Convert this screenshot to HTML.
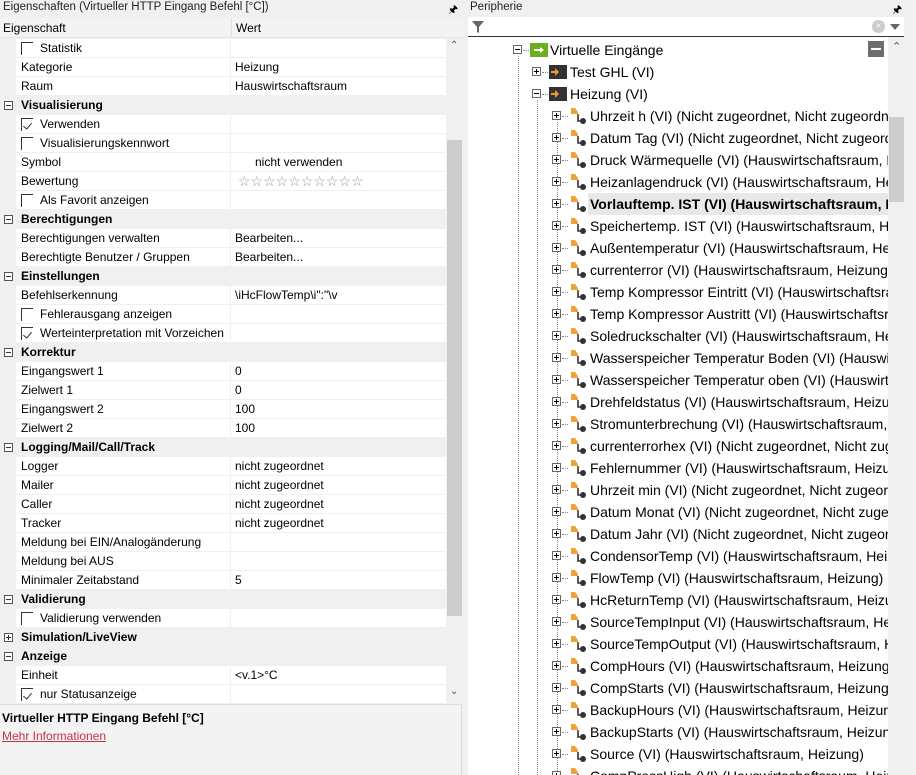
<!DOCTYPE html>
<html><head><meta charset="utf-8"><style>
*{margin:0;padding:0;box-sizing:border-box}
html,body{width:916px;height:775px;overflow:hidden}
body{background:#f0f0f0;font-family:"Liberation Sans",sans-serif;position:relative;color:#000}
.a{position:absolute}
#L{left:0;top:0;width:464px;height:775px;background:#f0f0f0}
.title{font-size:11.5px;color:#222;top:1px}
.row{position:absolute;left:0;width:446px;height:19px;font-size:12px;line-height:19px;background:#fff;border-bottom:1px solid #f0f0f0;margin-top:1px}
.row .n{position:absolute;left:21px;top:0}
.row .v{position:absolute;left:235px;top:0}
.row .sep{position:absolute;left:230px;top:0;width:1px;height:19px;background:#f0f0f0}
.row .ind{position:absolute;left:0;top:0;width:16px;height:19px;background:#f0f0f0}
.g{background:#f0f0f0;font-weight:bold}
.g .n{left:21px}
.g .bx{position:absolute;left:4px;top:5px;width:9px;height:9px;border:1px solid #555;background:#fff}
.g .bx:after{content:"";position:absolute;left:1px;top:3px;width:5px;height:1px;background:#333}
.g .bx.p:before{content:"";position:absolute;left:3px;top:1px;width:1px;height:5px;background:#333}
.cb{position:absolute;left:21px;top:3px;width:12px;height:13px;border-left:1px solid #333;border-top:1px solid #333}
.cb.c:after{content:"";position:absolute;left:3px;top:2px;width:4px;height:7px;border-right:1px solid #333;border-bottom:1px solid #333;transform:rotate(40deg)}
.row .cn{position:absolute;left:40px;top:0}
#R{left:466px;top:0;width:450px;height:775px}
.t{position:absolute;font-size:14px;line-height:22px;height:22px;white-space:nowrap;overflow:hidden}
.ex{position:absolute;width:9px;height:9px;border:1px solid #666;background:#fff}
.ex:after{content:"";position:absolute;left:1px;top:3px;width:5px;height:1px;background:#000}
.ex.p:before{content:"";position:absolute;left:3px;top:1px;width:1px;height:5px;background:#000}
.dh{position:absolute;height:1px;border-top:1px dotted #888}
.dv{position:absolute;width:1px;border-left:1px dotted #888}
.ic{position:absolute;width:18px;height:14px}
</style></head><body>
<div id="L" class="a">
<div class="a title" style="left:3px">Eigenschaften (Virtueller HTTP Eingang Befehl [°C])</div>
<div class="a" style="left:448px;top:1px;font-size:11px">&#x1F588;</div>
<div class="a" style="left:0;top:18px;width:464px;height:20px;background:#f3f3f3;border-bottom:1px solid #e6e6e6;font-size:12px;line-height:20px">
 <span class="a" style="left:3px">Eigenschaft</span><span class="a" style="left:231px;top:0;width:1px;height:20px;background:#e0e0e0"></span><span class="a" style="left:236px">Wert</span></div>
<div class="row" style="top:38px"><div class="ind"></div><div class="cb"></div><span class="cn">Statistik</span><div class="sep"></div></div>
<div class="row" style="top:57px"><div class="ind"></div><span class="n">Kategorie</span><div class="sep"></div><span class="v">Heizung</span></div>
<div class="row" style="top:76px"><div class="ind"></div><span class="n">Raum</span><div class="sep"></div><span class="v">Hauswirtschaftsraum</span></div>
<div class="row g" style="top:95px"><div class="bx"></div><span class="n">Visualisierung</span></div>
<div class="row" style="top:114px"><div class="ind"></div><div class="cb c"></div><span class="cn">Verwenden</span><div class="sep"></div></div>
<div class="row" style="top:133px"><div class="ind"></div><div class="cb"></div><span class="cn">Visualisierungskennwort</span><div class="sep"></div></div>
<div class="row" style="top:152px"><div class="ind"></div><span class="n">Symbol</span><div class="sep"></div><span class="v" style="left:255px">nicht verwenden</span></div>
<div class="row" style="top:171px"><div class="ind"></div><span class="n">Bewertung</span><div class="sep"></div><span class="v" style="left:238px;color:#999;font-size:14px;letter-spacing:0px">☆☆☆☆☆☆☆☆☆☆</span></div>
<div class="row" style="top:190px"><div class="ind"></div><div class="cb"></div><span class="cn">Als Favorit anzeigen</span><div class="sep"></div></div>
<div class="row g" style="top:209px"><div class="bx"></div><span class="n">Berechtigungen</span></div>
<div class="row" style="top:228px"><div class="ind"></div><span class="n">Berechtigungen verwalten</span><div class="sep"></div><span class="v">Bearbeiten...</span></div>
<div class="row" style="top:247px"><div class="ind"></div><span class="n">Berechtigte Benutzer / Gruppen</span><div class="sep"></div><span class="v">Bearbeiten...</span></div>
<div class="row g" style="top:266px"><div class="bx"></div><span class="n">Einstellungen</span></div>
<div class="row" style="top:285px"><div class="ind"></div><span class="n">Befehlserkennung</span><div class="sep"></div><span class="v">\iHcFlowTemp\i":"\v</span></div>
<div class="row" style="top:304px"><div class="ind"></div><div class="cb"></div><span class="cn">Fehlerausgang anzeigen</span><div class="sep"></div></div>
<div class="row" style="top:323px"><div class="ind"></div><div class="cb c"></div><span class="cn">Werteinterpretation mit Vorzeichen</span><div class="sep"></div></div>
<div class="row g" style="top:342px"><div class="bx"></div><span class="n">Korrektur</span></div>
<div class="row" style="top:361px"><div class="ind"></div><span class="n">Eingangswert 1</span><div class="sep"></div><span class="v">0</span></div>
<div class="row" style="top:380px"><div class="ind"></div><span class="n">Zielwert 1</span><div class="sep"></div><span class="v">0</span></div>
<div class="row" style="top:399px"><div class="ind"></div><span class="n">Eingangswert 2</span><div class="sep"></div><span class="v">100</span></div>
<div class="row" style="top:418px"><div class="ind"></div><span class="n">Zielwert 2</span><div class="sep"></div><span class="v">100</span></div>
<div class="row g" style="top:437px"><div class="bx"></div><span class="n">Logging/Mail/Call/Track</span></div>
<div class="row" style="top:456px"><div class="ind"></div><span class="n">Logger</span><div class="sep"></div><span class="v">nicht zugeordnet</span></div>
<div class="row" style="top:475px"><div class="ind"></div><span class="n">Mailer</span><div class="sep"></div><span class="v">nicht zugeordnet</span></div>
<div class="row" style="top:494px"><div class="ind"></div><span class="n">Caller</span><div class="sep"></div><span class="v">nicht zugeordnet</span></div>
<div class="row" style="top:513px"><div class="ind"></div><span class="n">Tracker</span><div class="sep"></div><span class="v">nicht zugeordnet</span></div>
<div class="row" style="top:532px"><div class="ind"></div><span class="n">Meldung bei EIN/Analogänderung</span><div class="sep"></div></div>
<div class="row" style="top:551px"><div class="ind"></div><span class="n">Meldung bei AUS</span><div class="sep"></div></div>
<div class="row" style="top:570px"><div class="ind"></div><span class="n">Minimaler Zeitabstand</span><div class="sep"></div><span class="v">5</span></div>
<div class="row g" style="top:589px"><div class="bx"></div><span class="n">Validierung</span></div>
<div class="row" style="top:608px"><div class="ind"></div><div class="cb"></div><span class="cn">Validierung verwenden</span><div class="sep"></div></div>
<div class="row g" style="top:627px"><div class="bx p"></div><span class="n">Simulation/LiveView</span></div>
<div class="row g" style="top:646px"><div class="bx"></div><span class="n">Anzeige</span></div>
<div class="row" style="top:665px"><div class="ind"></div><span class="n">Einheit</span><div class="sep"></div><span class="v">&lt;v.1&gt;°C</span></div>
<div class="row" style="top:684px"><div class="ind"></div><div class="cb c"></div><span class="cn">nur Statusanzeige</span><div class="sep"></div></div>
<div class="a" style="left:446px;top:38px;width:17px;height:665px;background:#f0f0f0"></div>
<div class="a" style="left:447px;top:140px;width:15px;height:476px;background:#cdcdcd"></div>
<div class="a" style="left:450px;top:40px;font-size:10px;color:#555">&#x2303;</div>
<div class="a" style="left:450px;top:686px;font-size:10px;color:#555">&#x2304;</div>
<div class="a" style="left:0;top:704px;width:462px;height:71px;background:#f3f3f3;border-top:1px solid #ddd;border-right:1px solid #ddd">
 <div class="a" style="left:2px;top:6px;font-size:12px;font-weight:bold">Virtueller HTTP Eingang Befehl [°C]</div>
 <div class="a" style="left:2px;top:24px;font-size:12px;color:#c8314a;text-decoration:underline">Mehr Informationen</div>
</div>
</div>

<div id="R" class="a">
<div class="a title" style="left:4px">Peripherie</div>
<div class="a" style="left:426px;top:1px;font-size:11px">&#x1F588;</div>
<div class="a" style="left:2px;top:17px;width:436px;height:20px;background:#fff;border-bottom:1px solid #333">
 <svg class="a" style="left:3px;top:3px" width="14" height="14"><path d="M1 1h12L8 7v6L6 12V7z" fill="#666"/></svg>
 <div class="a" style="left:404px;top:3px;width:13px;height:13px;border-radius:50%;background:#ccc;color:#fff;font-size:10px;line-height:13px;text-align:center">×</div>
 <svg class="a" style="left:422px;top:7px" width="10" height="6"><path d="M0 0h10L5 6z" fill="#666"/></svg>
</div>
<div class="a" style="left:2px;top:37px;width:420px;height:738px;background:#fff"></div>
<div class="a" style="left:422px;top:37px;width:17px;height:738px;background:#f0f0f0"></div>
<div class="a" style="left:423px;top:117px;width:15px;height:85px;background:#cdcdcd"></div>
<div class="a" style="left:426px;top:40px;font-size:11px;color:#555">&#x2303;</div>
<div class="a" style="left:440px;top:37px;width:10px;height:738px;background:#f0f0f0"></div>
<div class="a" style="left:402px;top:41px;width:16px;height:16px;background:#6e6e6e"><div class="a" style="left:3px;top:7px;width:10px;height:2px;background:#fff"></div></div>

<div class="dv" style="left:52px;top:56px;height:719px"></div>
<div class="dv" style="left:71px;top:100px;height:675px"></div>
<div class="dv" style="left:91px;top:122px;height:653px"></div>

<div class="ex" style="left:47px;top:45px"></div><div class="dh" style="left:57px;top:50px;width:6px"></div>
<div class="ic" style="left:64px;top:43px;background:#6cae1d"><div class="a" style="left:4px;top:6px;width:7px;height:2px;background:#fff"></div><div class="a" style="left:10px;top:4px;border-left:4px solid #fff;border-top:3px solid transparent;border-bottom:3px solid transparent"></div></div>
<div class="t" style="left:84px;top:39px">Virtuelle Eingänge</div>

<div class="ex p" style="left:66px;top:67px"></div><div class="dh" style="left:76px;top:72px;width:6px"></div>
<div class="ic" style="left:83px;top:65px;background:#333"><div class="a" style="left:2px;top:6px;width:5px;height:2px;background:#f29a2e"></div><div class="a" style="left:6px;top:3px;border-left:4px solid #f29a2e;border-top:4px solid transparent;border-bottom:4px solid transparent"></div></div>
<div class="t" style="left:104px;top:61px">Test GHL (VI)</div>

<div class="ex" style="left:66px;top:89px"></div><div class="dh" style="left:76px;top:94px;width:6px"></div>
<div class="ic" style="left:83px;top:87px;background:#333"><div class="a" style="left:2px;top:6px;width:5px;height:2px;background:#f29a2e"></div><div class="a" style="left:6px;top:3px;border-left:4px solid #f29a2e;border-top:4px solid transparent;border-bottom:4px solid transparent"></div></div>
<div class="t" style="left:104px;top:83px">Heizung (VI)</div>

<div class="a" style="left:122px;top:193px;width:300px;height:22px;background:#e8e8e8"></div>

<div id="items"></div>
</div>
<script>
var items=["Uhrzeit h (VI) (Nicht zugeordnet, Nicht zugeordnet)","Datum Tag (VI) (Nicht zugeordnet, Nicht zugeordnet)","Druck Wärmequelle (VI) (Hauswirtschaftsraum, Heizung)","Heizanlagendruck (VI) (Hauswirtschaftsraum, Heizung)","Vorlauftemp. IST (VI) (Hauswirtschaftsraum, Heizung)","Speichertemp. IST (VI) (Hauswirtschaftsraum, Heizung)","Außentemperatur (VI) (Hauswirtschaftsraum, Heizung)","currenterror (VI) (Hauswirtschaftsraum, Heizung)","Temp Kompressor Eintritt (VI) (Hauswirtschaftsraum)","Temp Kompressor Austritt (VI) (Hauswirtschaftsraum)","Soledruckschalter (VI) (Hauswirtschaftsraum, Heizung)","Wasserspeicher Temperatur Boden (VI) (Hauswirtschaftsraum)","Wasserspeicher Temperatur oben (VI) (Hauswirtschaftsraum)","Drehfeldstatus (VI) (Hauswirtschaftsraum, Heizung)","Stromunterbrechung (VI) (Hauswirtschaftsraum, Heizung)","currenterrorhex (VI) (Nicht zugeordnet, Nicht zugeordnet)","Fehlernummer (VI) (Hauswirtschaftsraum, Heizung)","Uhrzeit min (VI) (Nicht zugeordnet, Nicht zugeordnet)","Datum Monat (VI) (Nicht zugeordnet, Nicht zugeordnet)","Datum Jahr (VI) (Nicht zugeordnet, Nicht zugeordnet)","CondensorTemp (VI) (Hauswirtschaftsraum, Heizung)","FlowTemp (VI) (Hauswirtschaftsraum, Heizung)","HcReturnTemp (VI) (Hauswirtschaftsraum, Heizung)","SourceTempInput (VI) (Hauswirtschaftsraum, Heizung)","SourceTempOutput (VI) (Hauswirtschaftsraum, Heizung)","CompHours (VI) (Hauswirtschaftsraum, Heizung)","CompStarts (VI) (Hauswirtschaftsraum, Heizung)","BackupHours (VI) (Hauswirtschaftsraum, Heizung)","BackupStarts (VI) (Hauswirtschaftsraum, Heizung)","Source (VI) (Hauswirtschaftsraum, Heizung)","CompPressHigh (VI) (Hauswirtschaftsraum, Heizung)"];
var h="";
items.forEach(function(s,i){var y=105+i*22;
h+='<div class="ex p" style="left:86px;top:'+(y+6)+'px"></div><div class="dh" style="left:96px;top:'+(y+11)+'px;width:6px"></div>'+
'<svg class="a" style="left:103px;top:'+(y+2)+'px" width="18" height="18"><path d="M2 1h4l3 4v2H2z" fill="#f2a232"/><path d="M9 7v7h3" stroke="#333" stroke-width="1.6" fill="none"/><circle cx="14" cy="14" r="3" fill="#333"/></svg>'+
'<div class="t" style="left:124px;top:'+y+'px;width:298px;'+(i==4?'font-weight:bold;':'')+'">'+s+'</div>';});
document.getElementById("items").innerHTML=h;
</script>
</body></html>
